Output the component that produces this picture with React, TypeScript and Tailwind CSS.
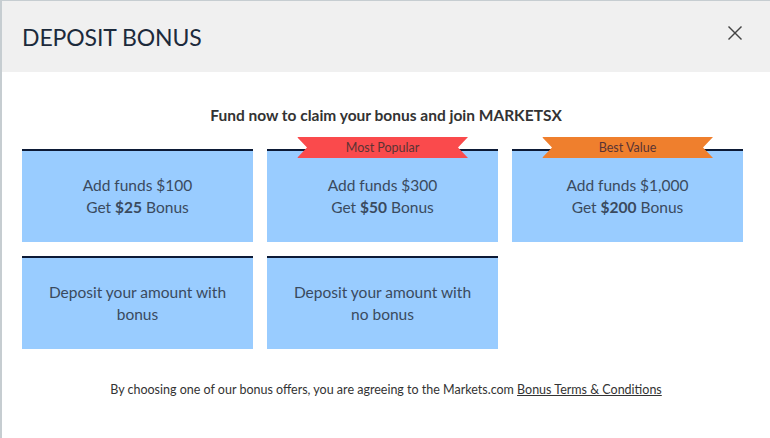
import { ReactNode } from "react";

type Offer = {
  lines: ReactNode;
  ribbon?: { label: string; color: string };
};

const offers: Offer[] = [
  {
    lines: (
      <>
        Add funds $100
        <br />
        Get <strong className="font-bold">$25</strong> Bonus
      </>
    ),
  },
  {
    lines: (
      <>
        Add funds $300
        <br />
        Get <strong className="font-bold">$50</strong> Bonus
      </>
    ),
    ribbon: { label: "Most Popular", color: "bg-[#fa4a4c]" },
  },
  {
    lines: (
      <>
        Add funds $1,000
        <br />
        Get <strong className="font-bold">$200</strong> Bonus
      </>
    ),
    ribbon: { label: "Best Value", color: "bg-[#ef7f2d]" },
  },
  {
    lines: (
      <>
        Deposit your amount with
        <br />
        bonus
      </>
    ),
  },
  {
    lines: (
      <>
        Deposit your amount with
        <br />
        no bonus
      </>
    ),
  },
];

function Ribbon({ label, color }: { label: string; color: string }) {
  return (
    <div
      className={`absolute left-1/2 -translate-x-1/2 -top-[14px] w-[171px] h-[21px] ${color} flex items-center justify-center text-[12.5px] text-[#5a3434] [clip-path:polygon(0_0,100%_0,calc(100%-10px)_50%,100%_100%,0_100%,10px_50%)]`}
    >
      {label}
    </div>
  );
}

function OfferCard({ offer }: { offer: Offer }) {
  return (
    <button className="relative h-[93px] bg-[#99ccff] border-t-2 border-[#0c1a36] flex items-center justify-center text-center text-[15.5px] leading-[22px] text-[#3a4a5e] cursor-pointer">
      {offer.ribbon && <Ribbon {...offer.ribbon} />}
      <span className="-mt-[2px]">{offer.lines}</span>
    </button>
  );
}

export default function App() {
  return (
    <div
      className="w-[770px] h-[438px] bg-white border-l-2 border-t border-[#c6cdd1] overflow-hidden"
      style={{ fontFamily: "Lato, 'Open Sans', sans-serif" }}
    >
      {/* header */}
      <div className="h-[71px] bg-[#f0f0f0] flex items-center justify-between pl-[20px] pr-[26px]">
        <h1 className="text-[23px] text-[#1c2a3b] tracking-[-0.1px] pt-[2px]">DEPOSIT BONUS</h1>
        <button className="w-[18px] h-[18px] mb-[8px] flex items-center justify-center cursor-pointer" title="Close">
          <svg width="16" height="16" viewBox="0 0 16 16" fill="none" stroke="#444" strokeWidth="1.4">
            <line x1="1.5" y1="1.5" x2="14.5" y2="14.5" />
            <line x1="14.5" y1="1.5" x2="1.5" y2="14.5" />
          </svg>
        </button>
      </div>

      {/* body */}
      <div className="pl-[20px] pr-[20px] pt-[33px]">
        <h2 className="text-center text-[15.5px] font-bold text-[#333] leading-[20px]">
          Fund now to claim your bonus and join MARKETSX
        </h2>

        <div className="mt-[24px] grid grid-cols-[231px_231px_231px] gap-[14px]">
          {offers.map((o, i) => (
            <OfferCard key={i} offer={o} />
          ))}
        </div>

        <p className="mt-[32px] text-center text-[12.5px] text-[#333]">
          By choosing one of our bonus offers, you are agreeing to the Markets.com{" "}
          <a className="underline cursor-pointer">Bonus Terms &amp; Conditions</a>
        </p>
      </div>
    </div>
  );
}
